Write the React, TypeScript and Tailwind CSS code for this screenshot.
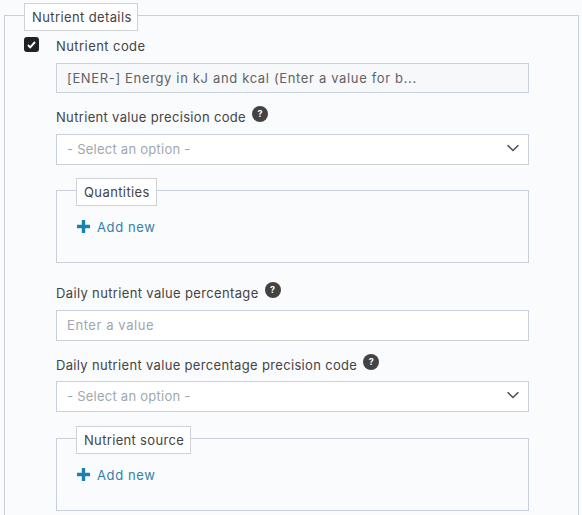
import type { ReactNode } from "react";

function Help() {
  return (
    <span className="ml-[6px] flex h-4 w-4 shrink-0 -translate-y-[3px] items-center justify-center rounded-full bg-[#434343] pb-px text-[9px] font-bold leading-none text-white">
      ?
    </span>
  );
}

function Label({ children, tracking, help = true }: { children: ReactNode; tracking: string; help?: boolean }) {
  return (
    <div className="flex h-5 items-center whitespace-nowrap text-[#444]">
      <span className={tracking}>{children}</span>
      {help && <Help />}
    </div>
  );
}

function Select() {
  return (
    <div className="flex h-[31px] items-center justify-between border border-[#c8d0dc] bg-white pb-px pl-[10px] pr-[9px] text-[#9ea8ae]">
      <span className="tracking-[0.25px]">- Select an option -</span>
      <svg width="12" height="8" viewBox="0 0 12 8" fill="none" stroke="#505050" strokeWidth="1.6" className="-translate-y-px">
        <path d="M.6 1.2 6 6.5l5.4-5.3" />
      </svg>
    </div>
  );
}

function Group({ title, width, tracking }: { title: string; width: string; tracking: string }) {
  return (
    <section className="h-[73px] border border-[#c8d0dc] pl-[19px]">
      <div className={`-mt-[13px] flex h-7 items-center border border-[#d0d2d6] bg-white pl-[7px] text-[#444] ${width}`}>
        <span className={`whitespace-nowrap ${tracking}`}>{title}</span>
      </div>
      <button className="mt-[11px] flex h-5 items-center pl-px text-[#3480aa]">
        <svg width="13" height="13" viewBox="0 0 13 13" fill="#1b82ad" className="mr-[7px] -translate-y-px">
          <path d="M5.3 0h2.4q.5 0 .5.5v4.3h4.3q.5 0 .5.5v2.4q0 .5-.5.5H8.2v4.3q0 .5-.5.5H5.3q-.5 0-.5-.5V8.2H.5Q0 8.2 0 7.7V5.3q0-.5.5-.5h4.3V.5q0-.5.5-.5z" />
        </svg>
        <span className="whitespace-nowrap tracking-[0.6px]">Add new</span>
      </button>
    </section>
  );
}

export default function App() {
  return (
    <main className="h-[515px] w-[582px] overflow-hidden bg-[#fafbfd] pl-1 pt-[15px] font-['Inter','Liberation_Sans',sans-serif] text-[13px] leading-5">
      <div className="h-[530px] w-[575px] border border-[#c8d0dc] pl-[19px]">
        <div className="-mt-[13px] flex h-7 w-[114px] items-center border border-[#d0d2d6] bg-white pb-px pl-[7px] text-[#444]">
          <span className="whitespace-nowrap tracking-[0.39px]">Nutrient details</span>
        </div>
        <div className="mt-[5px] flex">
          <div className="mr-[17px] mt-px flex h-[15px] w-[15px] shrink-0 items-center justify-center rounded-[3px] bg-[#202124]">
            <svg width="9" height="8" viewBox="0 0 9 8" fill="none" stroke="white" strokeWidth="1.9">
              <path d="m1 4 2.2 2.3L8 1" />
            </svg>
          </div>
          <div className="w-[473px]">
            <Label tracking="tracking-[0.43px]" help={false}>Nutrient code</Label>
            <div className="mt-[7px] flex h-[30px] items-center border border-[#c8d0dc] bg-[#f7f8fa] pl-[10px] text-[#5f6366]">
              <span className="whitespace-nowrap tracking-[0.65px]">[ENER-] Energy in kJ and kcal (Enter a value for b...</span>
            </div>
            <div className="mb-[7px] mt-[14px]">
              <Label tracking="tracking-[0.33px]">Nutrient value precision code</Label>
            </div>
            <Select />
            <div className="mt-[25px]">
              <Group title="Quantities" width="w-[81px]" tracking="tracking-[0.4px]" />
            </div>
            <div className="mb-[7px] mt-[20px]">
              <Label tracking="tracking-[0.35px]">Daily nutrient value percentage</Label>
            </div>
            <div className="flex h-[31px] items-center border border-[#c8d0dc] bg-white pb-px pl-[10px] text-[#9ea5b0]">
              <span className="tracking-[0.58px]">Enter a value</span>
            </div>
            <div className="mb-[6px] mt-[14px]">
              <Label tracking="tracking-[0.33px]">Daily nutrient value percentage precision code</Label>
            </div>
            <Select />
            <div className="mt-[26px]">
              <Group title="Nutrient source" width="w-[115px]" tracking="tracking-[0.33px]" />
            </div>
          </div>
        </div>
      </div>
    </main>
  );
}
